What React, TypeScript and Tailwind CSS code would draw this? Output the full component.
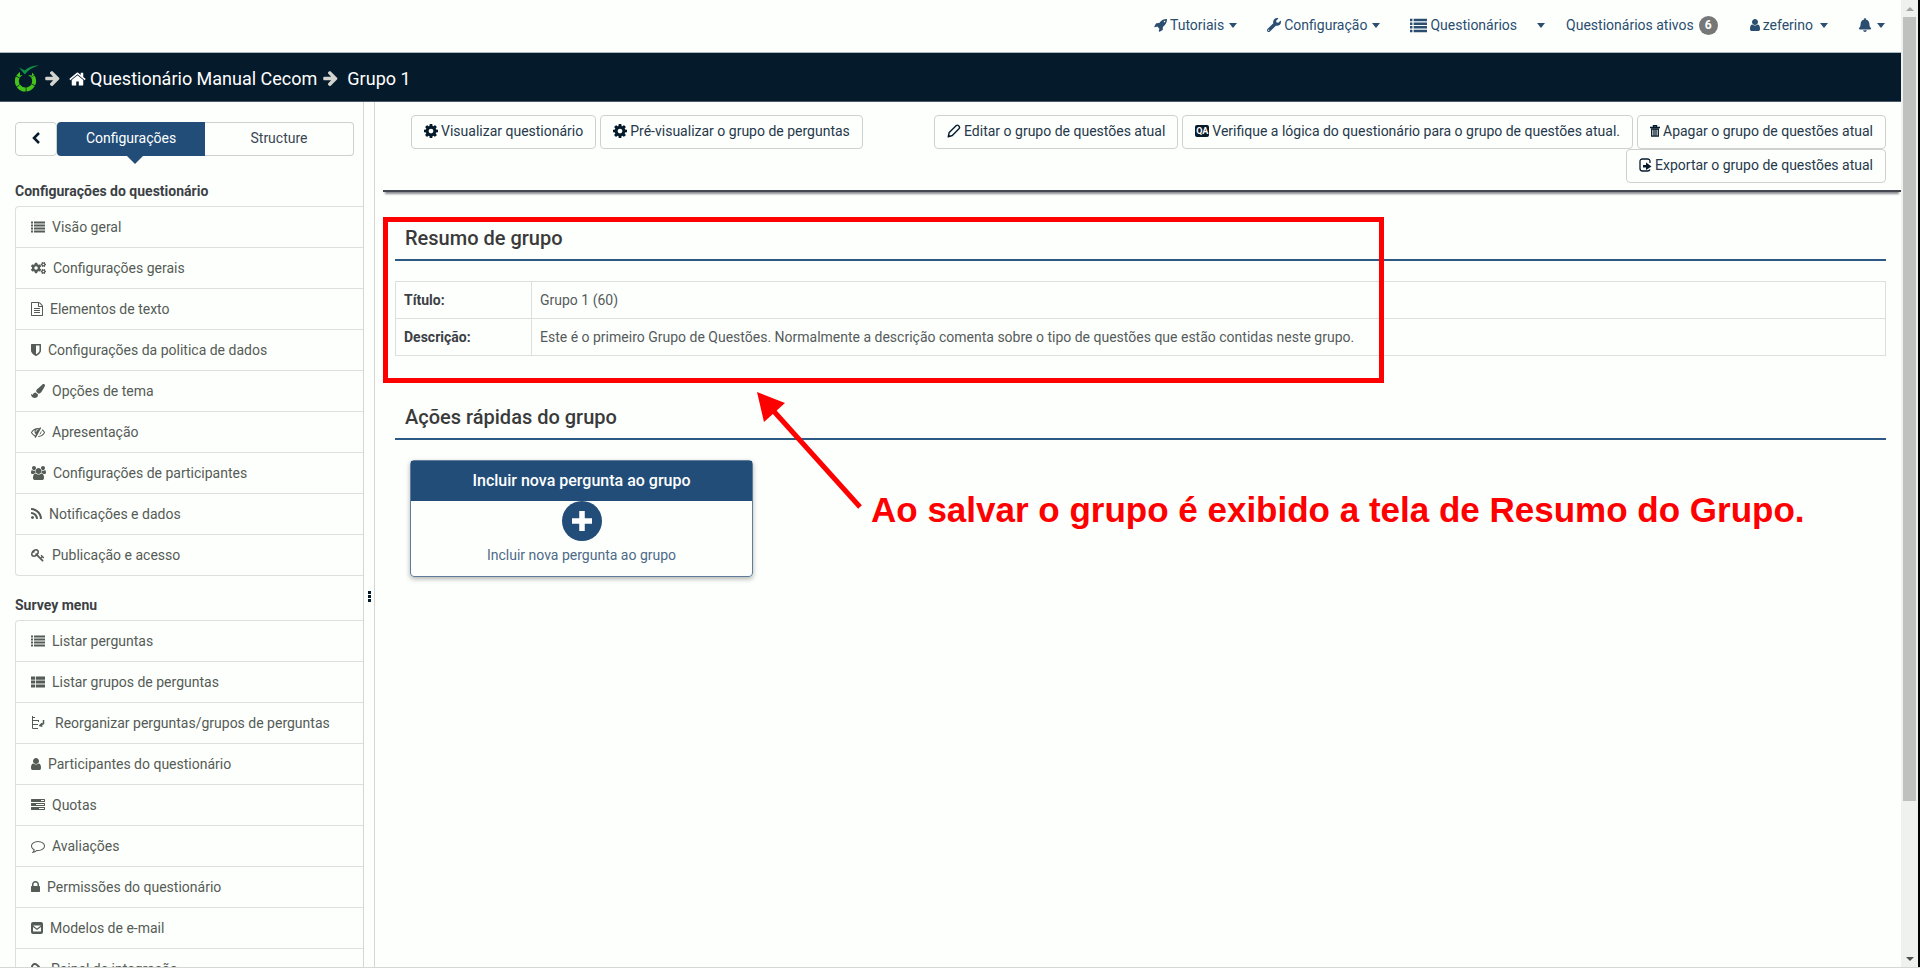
import type { ReactNode } from "react";
import { FaCogs, FaPaintBrush, FaBell, FaWrench, FaLink } from "react-icons/fa";

type GlyphProps = { box: string; d: string; className?: string };

function Glyph({ box, d, className = "h-3.5 w-auto" }: GlyphProps) {
  return (
    <svg viewBox={box} className={`shrink-0 ${className}`} fill="currentColor" aria-hidden="true">
      <path d={d} />
    </svg>
  );
}

const paths = {
  list: "M0 192h256v256H0zM384 192h1408v256H384zM0 576h256v256H0zM384 576h1408v256H384zM0 960h256v256H0zM384 960h1408v256H384zM0 1344h256v256H0zM384 1344h1408v256H384z",
  thList: "M0 192h540v400H0zM640 192h1152v400H640zM0 700h540v400H0zM640 700h1152v400H640zM0 1208h540v400H0zM640 1208h1152v400H640z",
  file: "M1596 380q28 28 48 76t20 88v1152q0 40-28 68t-68 28h-1344q-40 0-68-28t-28-68v-1600q0-40 28-68t68-28h896q40 0 88 20t76 48zm-444-244v376h376q-10-29-22-41l-313-313q-12-12-41-22zm384 1528v-1024h-416q-40 0-68-28t-28-68v-416h-768v1536h1280zm-1024-864q0-14 9-23t23-9h704q14 0 23 9t9 23v64q0 14-9 23t-23 9h-704q-14 0-23-9t-9-23v-64zm736 224q14 0 23 9t9 23v64q0 14-9 23t-23 9h-704q-14 0-23-9t-9-23v-64q0-14 9-23t23-9h704zm0 256q14 0 23 9t9 23v64q0 14-9 23t-23 9h-704q-14 0-23-9t-9-23v-64q0-14 9-23t23-9h704z",
  shield: "M1344 960v-640h-448v1137q119-63 213-137 235-184 235-360zm192-768v768q0 86-33.5 170.5t-83 150-118 127.5-126.5 103-121 77.5-89.5 49.5-42.5 20q-12 6-26 6t-26-6q-16-7-42.5-20t-89.5-49.5-121-77.5-126.5-103-118-127.5-83-150-33.5-170.5v-768q0-26 19-45t45-19h1152q26 0 45 19t19 45z",
  eyeSlash: "M555 1335l78-141q-87-63-136-159t-49-203q0-121 61-225-229 117-381 353 167 258 427 375zm389-759q0-20-14-34t-34-14q-125 0-214.5 89.5t-89.5 214.5q0 20 14 34t34 14 34-14 14-34q0-86 61-147t147-61q20 0 34-14t14-34zm363-191q0 7-1 9-106 189-316 567t-315 566l-49 89q-10 16-28 16-12 0-134-70-16-10-16-28 0-12 44-87-143-65-263.5-173t-208.5-245q-20-31-20-69t20-69q153-235 380-371t496-136q89 0 180 17l54-97q10-16 28-16 5 0 18 6t31 15.5 33 18.5 31.5 18.5 19.5 11.5q16 10 16 27zm37 447q0 139-79 253.5t-209 164.5l280-502q8 45 8 84zm448 128q0 35-20 69-39 64-109 145-150 172-347.5 267t-419.5 95l74-132q212-18 392.5-137t301.5-307q-115-179-282-294l63-112q95 64 182.5 153t144.5 184q20 34 20 69z",
  users: "M529 896q-162 5-265 128h-134q-82 0-138-40.5t-56-118.5q0-353 124-353 6 0 43.5 21t97.5 42.5 119 21.5q67 0 133-23-5 37-5 66 0 139 81 256zm1071 637q0 120-73 189.5t-194 69.5h-874q-121 0-194-69.5t-73-189.5q0-53 3.5-103.5t14-109 26.5-108.5 43-97.5 62-81 85.5-53.5 111.5-20q10 0 43 21.5t73 48 107 48 135 21.5 135-21.5 107-48 73-48 43-21.5q61 0 111.5 20t85.5 53.5 62 81 43 97.5 26.5 108.5 14 109 3.5 103.5zm-1024-1277q0 106-75 181t-181 75-181-75-75-181 75-181 181-75 181 75 75 181zm704 384q0 159-112.5 271.5t-271.5 112.5-271.5-112.5-112.5-271.5 112.5-271.5 271.5-112.5 271.5 112.5 112.5 271.5zm576 225q0 78-56 118.5t-138 40.5h-134q-103-123-265-128 81-117 81-256 0-29-5-66 66 23 133 23 59 0 119-21.5t97.5-42.5 43.5-21q124 0 124 353zm-128-609q0 106-75 181t-181 75-181-75-75-181 75-181 181-75 181 75 75 181z",
  rss: "M576 1344q0 80-56 136t-136 56-136-56-56-136 56-136 136-56 136 56 56 136zm512 123q2 28-17 48-18 21-47 21h-135q-25 0-43-16.5t-20-41.5q-22-229-184.5-391.5t-391.5-184.5q-25-2-41.5-20t-16.5-43v-135q0-29 21-47 17-17 43-17h5q160 13 306 80.5t259 181.5q114 113 181.5 259t80.5 306zm512 2q2 27-18 47-18 20-46 20h-143q-26 0-44.5-17.5t-19.5-42.5q-12-215-101-408.5t-231.5-336-336-231.5-408.5-102q-25-1-42.5-19.5t-17.5-43.5v-143q0-28 20-46 18-18 44-18h3q262 13 501.5 120t425.5 294q187 186 294 425.5t120 501.5z",
  key: "M832 512q0-80-56-136t-136-56-136 56-56 136q0 42 19 83-41-19-83-19-80 0-136 56t-56 136 56 136 136 56 136-56 56-136q0-42-19-83 41 19 83 19 80 0 136-56t56-136zm851 704q0 17-49 66t-66 49q-9 0-28.5-16t-36.5-33-38.5-40-24.5-26l-96 96 220 220q28 28 28 68 0 42-39 81t-81 39q-40 0-68-28l-671-671q-176 131-365 131-163 0-265.5-102.5t-102.5-265.5q0-160 95-313t248-248 313-95q163 0 265.5 102.5t102.5 265.5q0 189-131 365l355 355 96-96q-3-3-26-24.5t-40-38.5-33-36.5-16-28.5q0-17 49-66t66-49q13 0 23 10 6 6 46 44.5t82 79.5 86.5 86 73 78 28.5 41z",
  user: "M1536 1399q0 109-62.5 187t-150.5 78h-854q-88 0-150.5-78t-62.5-187q0-85 8.5-160.5t31.5-152 58.5-131 94-89 134.5-34.5q131 128 313 128t313-128q76 0 134.5 34.5t94 89 58.5 131 31.5 152 8.5 160.5zm-256-887q0 159-112.5 271.5t-271.5 112.5-271.5-112.5-112.5-271.5 112.5-271.5 271.5-112.5 271.5 112.5 112.5 271.5z",
  tasks: "M1024 1408h640v-128h-640v128zm-384-512h1024v-128h-1024v128zm640-512h384v-128h-384v128zm512 832v256q0 26-19 45t-45 19h-1664q-26 0-45-19t-19-45v-256q0-26 19-45t45-19h1664q26 0 45 19t19 45zm0-512v256q0 26-19 45t-45 19h-1664q-26 0-45-19t-19-45v-256q0-26 19-45t45-19h1664q26 0 45 19t19 45zm0-512v256q0 26-19 45t-45 19h-1664q-26 0-45-19t-19-45v-256q0-26 19-45t45-19h1664q26 0 45 19t19 45z",
  comment: "M896 384q-204 0-381.5 69.5t-282 187.5-104.5 255q0 112 71.5 213.5t201.5 175.5l87 50-27 96q-24 91-70 172 152-63 275-171l43-38 57 6q69 8 130 8 204 0 381.5-69.5t282-187.5 104.5-255-104.5-255-282-187.5-381.5-69.5zm896 512q0 174-120 321.5t-326 233-450 85.5q-70 0-145-8-198 175-460 242-49 14-114 22h-5q-15 0-27-10.5t-16-27.5v-1q-3-4-.5-12t2-10 4.5-9.5l6-9 7-8.5 8-9q7-8 31-34.5t34.5-38 31-39.5 32.5-51 27-59 26-76q-157-89-247.5-220t-90.5-281q0-130 71-248.5t191-204.5 286-136.5 348-50.5 348 50.5 286 136.5 191 204.5 71 248.5z",
  lock: "M640 768h512v-192q0-106-75-181t-181-75-181 75-75 181v192zm832 96v576q0 40-28 68t-68 28h-960q-40 0-68-28t-28-68v-576q0-40 28-68t68-28h32v-192q0-184 132-316t316-132 316 132 132 316v192h32q40 0 68 28t28 68z",
  rocket: "M1440 448q0-40-28-68t-68-28-68 28-28 68 28 68 68 28 68-28 28-68zm224-288q0 249-75.5 430.5t-253.5 360.5q-81 80-195 176l-20 379q-2 16-16 26l-384 224q-7 4-16 4-12 0-23-9l-64-64q-13-14-8-32l85-276-281-281-276 85q-3 1-9 1-14 0-23-9l-64-64q-17-19-5-39l224-384q10-14 26-16l379-20q96-114 176-195 188-187 358-258t431-71q14 0 24 9.5t10 22.5z",
  home: "M1472 992v480q0 26-19 45t-45 19h-384v-384h-256v384h-384q-26 0-45-19t-19-45v-480q0-1 .5-3t.5-3l575-474 575 474q1 2 1 6zm223-69l-62 74q-8 9-21 11h-3q-13 0-21-7l-692-577-692 577q-12 8-24 7-13-2-21-11l-62-74q-8-10-7-23.5t11-21.5l719-599q32-26 76-26t76 26l244 204v-195q0-14 9-23t23-9h192q14 0 23 9t9 23v408l219 182q10 8 11 21.5t-7 23.5z",
  arrow: "M1600 960q0 54-37 91l-651 651q-39 37-91 37-51 0-90-37l-75-75q-38-38-38-91t38-91l293-293h-704q-52 0-84.5-37.5t-32.5-90.5v-128q0-53 32.5-90.5t84.5-37.5h704l-293-294q-38-36-38-90t38-90l75-75q38-38 90-38 53 0 91 38l651 651q37 35 37 90z",
  cog: "M1152 896q0-106-75-181t-181-75-181 75-75 181 75 181 181 75 181-75 75-181zm512-109v222q0 12-8 23t-20 13l-185 28q-19 54-39 91 35 50 107 138 10 12 10 25t-9 23q-27 37-99 108t-94 71q-12 0-26-9l-138-108q-44 23-91 38-16 136-29 186-7 28-36 28h-222q-14 0-24.5-8.5t-11.5-21.5l-28-184q-49-16-90-37l-141 107q-10 9-25 9-14 0-25-11-126-114-165-168-7-10-7-23 0-12 8-23 15-21 51-66.5t54-70.5q-27-50-41-99l-183-27q-13-2-21-12.5t-8-23.5v-222q0-12 8-23t19-13l186-28q14-46 39-92-40-57-107-138-10-12-10-24 0-10 9-23 26-36 98.5-107.5t94.5-71.5q13 0 26 10l138 107q44-23 91-38 16-136 29-186 7-28 36-28h222q14 0 24.5 8.5t11.5 21.5l28 184q49 16 90 37l142-107q9-9 24-9 13 0 25 10 129 119 165 170 7 8 7 22 0 12-8 23-15 21-51 66.5t-54 70.5q26 50 41 98l183 28q13 2 21 12.5t8 23.5z",
};

function Caret() {
  return (
    <svg viewBox="0 0 8 5" className="h-[5px] w-2 shrink-0" fill="currentColor" aria-hidden="true">
      <path d="M0 0h8L4 5z" />
    </svg>
  );
}

function Logo() {
  return (
    <svg viewBox="0 0 24 27" className="h-[27px] w-6 shrink-0" fill="none" aria-hidden="true">
      <circle cx="10.5" cy="16" r="8.6" stroke="#46c31b" strokeWidth="4" strokeDasharray="8.3 .7" transform="rotate(-32 10.5 16)" />
      <path d="M5 5h12v5.500l-3.500-.5-3 2-3.500-2-2 .5z" fill="#051a2b" />
      <path d="M4 2.500 9.800 9.600C13 5 17.500 2 24 .5 18.500 .3 13.500 2 9.800 5.400z" fill="#0f9347" />
    </svg>
  );
}

function ReorderIcon() {
  return (
    <svg viewBox="0 0 17 14" className="h-3.5 w-[17px] shrink-0" fill="none" stroke="currentColor" aria-hidden="true">
      <path d="M1.500 0v12.500H7M1.500 4.500H8M1.500 8.500H7M1.500 1.500H4M7.500 4v2" />
      <path d="M12.500 4v3.500L9 9.500" strokeWidth="1.500" />
      <path d="M10.800 6.500 7.500 10l4 1z" fill="currentColor" stroke="none" />
    </svg>
  );
}

function MailSquare() {
  return (
    <svg viewBox="0 0 12 12" className="h-3 w-3 shrink-0" fill="none" aria-hidden="true">
      <rect width="12" height="12" rx="2" fill="currentColor" />
      <path d="M2 3.500h8L6 6.500zM2 5v4.500h8V5L6 8z" fill="#fdfffd" />
    </svg>
  );
}

function Pencil() {
  return (
    <svg viewBox="0 0 14 14" className="h-3.5 w-3.5 shrink-0" fill="none" stroke="currentColor" strokeWidth="1.400" aria-hidden="true">
      <path d="M1.200 12.800 2.200 8.500 9.300 1.500q1.200-.9 2.500.4t.4 2.500L5.300 11.500z" strokeLinejoin="round" />
      <path d="M1 13 1.700 10.500 3.600 12.300z" fill="currentColor" stroke="none" />
    </svg>
  );
}

function Trash() {
  return (
    <svg viewBox="0 0 10 12" className="h-3 w-2.5 shrink-0" fill="none" stroke="currentColor" aria-hidden="true">
      <path d="M0 2.500h10M3.500 2V.8h3V2" strokeWidth="1.400" />
      <path d="M1.700 4v7.200h6.600V4zM4 4v7M6 4v7" strokeWidth="1.300" />
    </svg>
  );
}

function ExportIcon() {
  return (
    <svg viewBox="0 0 13 14" className="h-3.5 w-[13px] shrink-0" fill="none" stroke="currentColor" aria-hidden="true">
      <path d="M11 5V3.500Q11 1 8.500 1H3.500Q1 1 1 3.500v7Q1 13 3.500 13h5q2 0 2.500-1.500" strokeWidth="1.300" />
      <path d="M4 7h3V4.500L12.500 8.500 7 12V9.500H4z" fill="currentColor" stroke="none" />
    </svg>
  );
}

function NavItem({ icon, label, extra, className = "" }: { icon?: ReactNode; label?: string; extra?: ReactNode; className?: string }) {
  return (
    <a href="#" className={`flex items-center gap-[3px] ${className}`}>
      {icon}
      {label && <span>{label}</span>}
      {extra}
    </a>
  );
}

function TopNav() {
  return (
    <nav className="flex h-[53px] shrink-0 items-center justify-end border-b border-[#a9b9c2] pr-4 pb-0.5 text-[#2a4d70]">
      <NavItem icon={<Glyph box="0 128 1664 1664" d={paths.rocket} className="h-[13px] w-[13px]" />} label="Tutoriais" extra={<span className="ml-0.5"><Caret /></span>} />
      <NavItem className="ml-[30px]" icon={<FaWrench className="h-3.5 w-3.5" />} label="Configuração" extra={<span className="ml-0.5"><Caret /></span>} />
      <NavItem className="ml-[30px]" icon={<Glyph box="0 128 1792 1536" d={paths.list} className="h-[15px] w-[17px]" />} label="Questionários" />
      <button type="button" aria-label="Abrir questionários" className="ml-5">
        <Caret />
      </button>
      <NavItem
        className="ml-[21px]"
        label="Questionários ativos"
        extra={<span className="ml-0.5 flex h-[19px] w-[19px] items-center justify-center rounded-full bg-[#777] text-xs font-bold text-white">6</span>}
      />
      <NavItem className="ml-8" icon={<Glyph box="256 128 1280 1536" d={paths.user} className="h-3 w-2.5" />} label="zeferino" extra={<span className="ml-1"><Caret /></span>} />
      <NavItem className="ml-[30px]" icon={<FaBell className="mr-0.5 h-3.5 w-3.5" />} extra={<Caret />} />
    </nav>
  );
}

function Breadcrumb() {
  return (
    <header className="flex h-[49px] shrink-0 items-center border-b border-[#4a5965] bg-[#051a2b] px-[15px] pt-[3px] text-lg text-white">
      <Logo />
      <Glyph box="0 128 1664 1664" d={paths.arrow} className="ml-[5px] h-[17px] w-4 text-[#d3d3cf]" />
      <a href="#" className="ml-[9px] flex items-center gap-1">
        <Glyph box="64 192 1664 1400" d={paths.home} className="h-3.5 w-[17px]" />
        Questionário Manual Cecom
      </a>
      <Glyph box="0 128 1664 1664" d={paths.arrow} className="ml-[5px] h-[17px] w-4 text-[#d3d3cf]" />
      <span className="ml-[9px]">Grupo 1</span>
    </header>
  );
}

type Item = { label: string; icon: ReactNode };

const surveySettings: Item[] = [
  { label: "Visão geral", icon: <Glyph box="0 0 1792 1792" d={paths.list} /> },
  { label: "Configurações gerais", icon: <FaCogs className="h-3.5 w-[15px] shrink-0" /> },
  { label: "Elementos de texto", icon: <Glyph box="128 0 1536 1792" d={paths.file} /> },
  { label: "Configurações da politica de dados", icon: <Glyph box="256 0 1280 1792" d={paths.shield} /> },
  { label: "Opções de tema", icon: <FaPaintBrush className="h-3.5 w-3.5 shrink-0" /> },
  { label: "Apresentação", icon: <Glyph box="0 0 1792 1792" d={paths.eyeSlash} /> },
  { label: "Configurações de participantes", icon: <Glyph box="-64 0 1920 1792" d={paths.users} /> },
  { label: "Notificações e dados", icon: <Glyph box="192 0 1408 1792" d={paths.rss} /> },
  { label: "Publicação e acesso", icon: <Glyph box="0 0 1792 1792" d={paths.key} /> },
];

const surveyMenu: Item[] = [
  { label: "Listar perguntas", icon: <Glyph box="0 0 1792 1792" d={paths.list} /> },
  { label: "Listar grupos de perguntas", icon: <Glyph box="0 0 1792 1792" d={paths.thList} /> },
  { label: "Reorganizar perguntas/grupos de perguntas", icon: <ReorderIcon /> },
  { label: "Participantes do questionário", icon: <Glyph box="256 0 1280 1792" d={paths.user} /> },
  { label: "Quotas", icon: <Glyph box="0 0 1792 1792" d={paths.tasks} /> },
  { label: "Avaliações", icon: <Glyph box="0 0 1792 1792" d={paths.comment} /> },
  { label: "Permissões do questionário", icon: <Glyph box="320 0 1152 1792" d={paths.lock} /> },
  { label: "Modelos de e-mail", icon: <MailSquare /> },
  { label: "Painel de integração", icon: <FaLink className="h-[13px] w-[13px] shrink-0 -scale-x-100" /> },
];

function MenuGroup({ title, items }: { title: string; items: Item[] }) {
  return (
    <section>
      <h2 className="mb-[5px] font-bold text-[#3c3f45]">{title}</h2>
      <ul className="rounded-l border-y border-l border-[#dddfdd]">
        {items.map((item, i) => (
          <li key={item.label} className={i > 0 ? "border-t border-[#dddfdd]" : ""}>
            <a href="#" className="flex h-10 items-center gap-[7px] pl-[15px] whitespace-nowrap text-[#555b55]">
              {item.icon}
              {item.label}
            </a>
          </li>
        ))}
      </ul>
    </section>
  );
}

function Sidebar() {
  return (
    <aside className="w-[364px] shrink-0 border-r border-[#d5d7d5] pt-5 pl-[15px]">
      <div className="mr-[9px] mb-[25px] flex h-[34px]">
        <button type="button" aria-label="Recolher" className="flex w-[42px] items-center justify-center rounded border border-[#cfd1cf] pb-0.5 text-[#051a2b]">
          <svg viewBox="0 0 8 12" className="h-3 w-2" fill="none" stroke="currentColor" strokeWidth="2.500" aria-hidden="true">
            <path d="M7 1 2 6l5 5" />
          </svg>
        </button>
        <button type="button" className="relative flex-1 rounded-l bg-[#214d78] pb-0.5 text-white">
          Configurações
          <svg viewBox="0 0 16 8" className="absolute top-full left-[70px] h-2 w-4 text-[#214d78]" fill="currentColor" aria-hidden="true">
            <path d="M0 0h16L8 8z" />
          </svg>
        </button>
        <button type="button" className="flex-1 rounded-r border border-l-0 border-[#cfd1cf] pb-0.5 text-[#3a4652]">
          Structure
        </button>
      </div>
      <div className="flex flex-col gap-[19px]">
        <MenuGroup title="Configurações do questionário" items={surveySettings} />
        <MenuGroup title="Survey menu" items={surveyMenu} />
      </div>
    </aside>
  );
}

function ToolButton({ icon, children }: { icon: ReactNode; children: ReactNode }) {
  return (
    <button type="button" className="flex h-[34px] items-center gap-[3px] rounded border border-[#cfd1cf] px-3 pb-0.5 whitespace-nowrap text-[#26384a]">
      <span className="text-[#051a2b]">{icon}</span>
      {children}
    </button>
  );
}

function Toolbar() {
  const cog = <Glyph box="128 128 1536 1536" d={paths.cog} className="h-3.5 w-3.5" />;
  return (
    <div className="ml-2 flex items-start justify-between border-b-2 border-[#454850] pt-[13px] pr-[15px] pb-[7px] pl-7 shadow-[0_4px_2px_-2px_rgba(60,60,70,0.6)]">
      <div className="flex gap-1">
        <ToolButton icon={cog}>Visualizar questionário</ToolButton>
        <ToolButton icon={cog}>Pré-visualizar o grupo de perguntas</ToolButton>
      </div>
      <div className="flex max-w-[960px] flex-wrap justify-end gap-x-1">
        <ToolButton icon={<Pencil />}>Editar o grupo de questões atual</ToolButton>
        <ToolButton icon={<span className="flex h-3 w-3.5 items-center justify-center rounded-xs bg-[#051a2b] text-[9px] font-bold text-white">QA</span>}>
          Verifique a lógica do questionário para o grupo de questões atual.
        </ToolButton>
        <ToolButton icon={<Trash />}>Apagar o grupo de questões atual</ToolButton>
        <ToolButton icon={<ExportIcon />}>Exportar o grupo de questões atual</ToolButton>
      </div>
    </div>
  );
}

function SectionTitle({ children }: { children: ReactNode }) {
  return <h3 className="border-b-2 border-[#2d5a85] px-2.5 pb-[9px] text-xl leading-6 font-medium text-[#3a3a3a]">{children}</h3>;
}

function Annotation() {
  return (
    <>
      <div className="pointer-events-none absolute top-[115px] left-2 h-[166px] w-[1001px] border-5 border-[#fe0000]" />
      <svg viewBox="0 0 110 120" className="pointer-events-none absolute top-[288px] left-[380px] h-[120px] w-[110px]" aria-hidden="true">
        <path d="M15 17 105 117" stroke="#fe0000" strokeWidth="5" />
        <path d="M2 2 30 13 9 32z" fill="#fe0000" />
      </svg>
      <p className="pointer-events-none absolute top-[388px] left-[496px] font-['Liberation_Sans',sans-serif] text-[35px] leading-10 font-bold whitespace-nowrap text-[#fe0000]">
        Ao salvar o grupo é exibido a tela de Resumo do Grupo.
      </p>
    </>
  );
}

function Content() {
  return (
    <main className="relative min-w-0 flex-1 border-l border-[#d5d7d5]">
      <Toolbar />
      <div className="pt-[34px] pr-[15px] pl-5">
        <SectionTitle>Resumo de grupo</SectionTitle>
        <table className="mt-5 w-full border-collapse text-left text-[#555b5b]">
          <tbody>
            <tr className="h-[37px]">
              <th scope="row" className="w-[136px] border border-[#dddfdd] px-2 text-[#3c3f45]">Título:</th>
              <td className="border border-[#dddfdd] px-2">Grupo 1 (60)</td>
            </tr>
            <tr className="h-[37px]">
              <th scope="row" className="border border-[#dddfdd] px-2 text-[#3c3f45]">Descrição:</th>
              <td className="border border-[#dddfdd] px-2">
                Este é o primeiro Grupo de Questões. Normalmente a descrição comenta sobre o tipo de questões que estão contidas neste grupo.
              </td>
            </tr>
          </tbody>
        </table>
        <div className="mt-[49px]">
          <SectionTitle>Ações rápidas do grupo</SectionTitle>
        </div>
        <a href="#" className="mt-5 ml-[15px] flex h-[117px] w-[343px] flex-col items-center rounded border border-[#5f7d9b] text-[#4d6a88] shadow-[0_2px_5px_rgba(0,0,0,0.3)]">
          <span className="flex h-10 w-full shrink-0 items-center justify-center bg-[#214d78] text-base font-medium text-white">
            Incluir nova pergunta ao grupo
          </span>
          <svg viewBox="0 0 40 40" className="h-10 w-10 shrink-0" aria-hidden="true">
            <circle cx="20" cy="20" r="20" fill="#214d78" />
            <path d="M20 10v20M10 20h20" stroke="#fff" strokeWidth="5.500" />
          </svg>
          <span className="mt-1">Incluir nova pergunta ao grupo</span>
        </a>
      </div>
      <Annotation />
    </main>
  );
}

function Scrollbar() {
  return (
    <div className="flex w-[19px] shrink-0 flex-col items-center border-r-2 border-black bg-[#eff1ef]" aria-hidden="true">
      <div className="flex h-[17px] items-center text-[#a3a5a3]">
        <svg viewBox="0 0 8 4" className="h-1 w-2" fill="currentColor"><path d="M0 4h8L4 0z" /></svg>
      </div>
      <div className="w-[13px] grow-[784] bg-[#bfc1bf]" />
      <div className="grow-[149]" />
      <div className="flex h-[17px] items-center text-[#505050]">
        <svg viewBox="0 0 8 4" className="h-1 w-2" fill="currentColor"><path d="M0 0h8L4 4z" /></svg>
      </div>
    </div>
  );
}

export default function App() {
  return (
    <div className="flex h-screen overflow-hidden border-b border-[#d5d7d5] bg-[#fdfffd] font-[Roboto,sans-serif] text-sm">
      <div className="flex min-w-0 flex-1 flex-col">
        <TopNav />
        <Breadcrumb />
        <div className="flex min-h-0 flex-1 overflow-hidden">
          <Sidebar />
          <div className="flex w-2.5 shrink-0 justify-center pt-[489px]">
            <svg viewBox="0 0 3 11" className="h-[11px] w-[3px]" fill="#051a2b" aria-hidden="true">
              <path d="M0 0h3v3H0zM0 4h3v3H0zM0 8h3v3H0z" />
            </svg>
          </div>
          <Content />
        </div>
      </div>
      <Scrollbar />
    </div>
  );
}
